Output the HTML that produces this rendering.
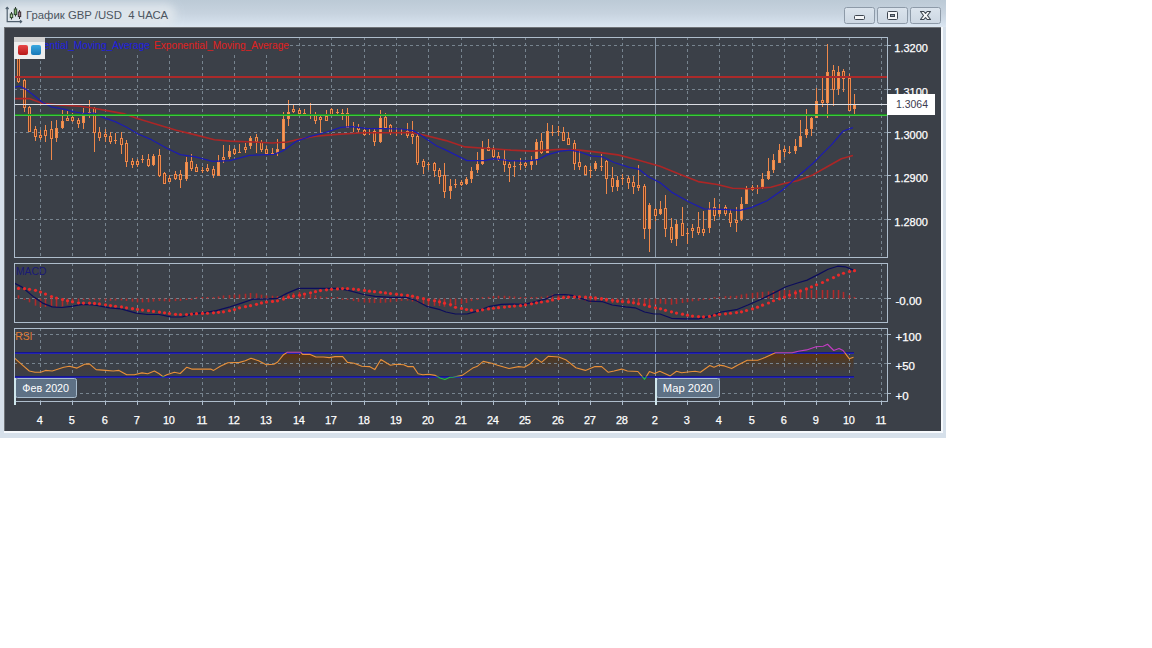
<!DOCTYPE html><html><head><meta charset="utf-8"><title>GBP/USD</title><style>
html,body{margin:0;padding:0;background:#fff;width:1152px;height:648px;overflow:hidden}
svg{display:block;font-family:"Liberation Sans",sans-serif}
</style></head><body>
<svg width="1152" height="648" viewBox="0 0 1152 648">
<defs>
<linearGradient id="tb" x1="0" y1="0" x2="0" y2="1"><stop offset="0" stop-color="#bccad6"/><stop offset="0.5" stop-color="#c7d3df"/><stop offset="0.9" stop-color="#d6e2ee"/><stop offset="1" stop-color="#dce6f1"/></linearGradient><filter id="glow" x="-20%" y="-50%" width="140%" height="200%"><feGaussianBlur stdDeviation="4"/></filter>
<linearGradient id="btn" x1="0" y1="0" x2="0" y2="1"><stop offset="0" stop-color="#dbe4ed"/><stop offset="1" stop-color="#ccd7e2"/></linearGradient>
<linearGradient id="rsif" x1="0" y1="352" x2="0" y2="376" gradientUnits="userSpaceOnUse"><stop offset="0" stop-color="#60330c"/><stop offset="0.33" stop-color="#4d3926"/><stop offset="0.7" stop-color="#403d40"/><stop offset="1" stop-color="#3b3f47"/></linearGradient>
<linearGradient id="rbox" x1="0" y1="0" x2="0" y2="1"><stop offset="0" stop-color="#e84848"/><stop offset="1" stop-color="#b81818"/></linearGradient>
<linearGradient id="bbox" x1="0" y1="0" x2="0" y2="1"><stop offset="0" stop-color="#3aa8e0"/><stop offset="1" stop-color="#1878b8"/></linearGradient>
<clipPath id="cmain"><rect x="15" y="38" width="872" height="219"/></clipPath>
<clipPath id="cmacd"><rect x="15" y="264" width="872" height="58"/></clipPath>
<clipPath id="crsi"><rect x="15" y="329" width="872" height="72"/></clipPath>
<clipPath id="cband"><rect x="0" y="352.5" width="1152" height="24"/></clipPath>
<clipPath id="cup"><rect x="0" y="0" width="1152" height="352.8"/></clipPath>
<clipPath id="cdn"><rect x="0" y="376.4" width="1152" height="100"/></clipPath>
</defs>
<rect x="0" y="0" width="946" height="438" fill="#d6e0ea"/>
<rect x="0" y="0" width="946" height="27" fill="url(#tb)"/>
<rect x="0" y="27" width="4" height="406" fill="#d6e0ea"/>
<rect x="-4" y="4" width="180" height="22" rx="10" fill="#dfe6ec" opacity="0.95" filter="url(#glow)"/>
<rect x="4" y="431" width="939" height="2" fill="#f6f9fc"/>
<rect x="941" y="27" width="2" height="406" fill="#f6f9fc"/>
<rect x="4" y="27" width="937" height="404" fill="#3b4048"/>
<rect x="4" y="27" width="937" height="1" fill="#6f7378"/>
<rect x="4" y="27" width="1" height="404" fill="#6f7378"/>
<g fill="none" stroke="#4f5f6e" stroke-width="1.2">
<path d="M7.2 7.5 V21.6 H21.5"/>
<path d="M5.8 9 L7.2 7.4 L8.6 9 M20 20.2 L21.6 21.6 L20 23"/>
</g>
<g stroke-width="1">
<path d="M11.5 12 V19.5 M15.5 7 V16.5 M19.5 10 V19" stroke="#2c3a30"/>
<rect x="10.3" y="14" width="2.4" height="3.6" fill="#b4d4a0" stroke="#2f4530"/>
<rect x="14.3" y="9" width="2.4" height="5.6" fill="#78b068" stroke="#2f4530"/>
<rect x="18.3" y="12" width="2.4" height="4.6" fill="#a87888" stroke="#3a2e34"/>
</g>
<text x="26" y="19.4" font-size="11.4" fill="#4c5560" textLength="142" lengthAdjust="spacingAndGlyphs">График GBP /USD&#160; 4 ЧАСА</text>
<rect x="844.5" y="7.5" width="30" height="16" rx="2" ry="2" fill="url(#btn)" stroke="#8d9aa8" stroke-width="1"/>
<rect x="877.5" y="7.5" width="30" height="16" rx="2" ry="2" fill="url(#btn)" stroke="#8d9aa8" stroke-width="1"/>
<rect x="910.5" y="7.5" width="30" height="16" rx="2" ry="2" fill="url(#btn)" stroke="#8d9aa8" stroke-width="1"/>
<rect x="854.5" y="15.5" width="10" height="4" rx="1" fill="#f4f6f8" stroke="#3e4650" stroke-width="1"/>
<rect x="887.5" y="11.5" width="10" height="8" rx="1" fill="#f4f6f8" stroke="#3e4650" stroke-width="1"/>
<rect x="890.5" y="14.5" width="4" height="2" fill="#8a96a2" stroke="#3e4650" stroke-width="1"/>
<path d="M920.5 11.5 H923.8 L925.5 13.4 L927.2 11.5 H930.5 L927.5 15.5 L930.5 19.5 H927.2 L925.5 17.6 L923.8 19.5 H920.5 L923.5 15.5 Z" fill="#f6f7f8" stroke="#3e4650" stroke-width="1.1" stroke-linejoin="round"/>
<g clip-path="url(#cband)"><polygon points="14,357.6 21.6,364.3 29.3,371 35,372.3 40.7,372.3 45.5,370.4 52.2,371 63.7,367.2 69.4,366.2 77,368.1 84.7,364.3 89.4,363.9 96.1,369.6 105.7,370.4 113.3,371 119,370.4 126.7,374.8 134.3,374.8 142,372.9 147.7,373.8 154.4,371 159.2,373.8 163,376.7 166.8,374.8 174.4,372.3 180.2,373.5 186.8,367.2 191.6,369.1 210.7,369.1 213.6,370.4 220.3,366.2 227.9,362.8 239.5,362.4 245.3,360.8 251,358.2 258.6,360.8 266.3,364.7 273.9,364.3 277.7,362 283.5,354.7 287.3,352.3 300.7,352.3 302.6,354.4 310.2,354.4 315.9,357 323.6,357 329.3,357.6 335,356.6 342.7,356.6 347.5,362.4 354.1,363.3 361.8,366.2 369.4,366.6 374.8,369.6 380.9,359.5 390.4,365.2 396.2,364.3 403.8,364.7 407.6,366.6 413.3,366.6 418.1,373.8 422.9,374.8 428.6,374.2 435.3,375.4 440.1,378 444.9,379.6 450,377.3 452.7,377.3 462.2,375.4 472.7,368.1 477.5,366.2 483.2,361.4 491.8,363.3 497.6,365.2 509,368.5 518.6,366.6 524.3,367.2 530,363.9 535.8,358.2 541.5,362.4 548.2,356.3 558.7,357 566.3,360.1 575.9,367.7 585.4,370.4 595,366.6 601.7,366.6 608.3,372.3 614.1,371 621.7,369.1 627.4,371 637.9,371.5 640.8,374.8 644.6,379.3 649.4,371.6 654.6,373.4 659.8,371.3 670.2,375.9 676.5,371.3 681.7,372.8 690,371.75 695.2,371.3 700.4,372.2 709.8,365.5 714,367.2 719.2,365.1 724.4,365.9 731.7,368.6 737.9,365.1 747.3,360.3 757.7,360.3 765,357.6 775.4,352.8 792.1,352.8 798.3,351.3 806.7,349.9 816,346.75 823.3,346.3 827.5,344.25 833.75,350.5 839,348.4 843.1,350.5 849.4,358.8 853.5,357.2 853.5,377 14,377" fill="url(#rsif)"/></g>
<g stroke="#77848f" stroke-width="1" stroke-dasharray="3 3" shape-rendering="crispEdges" fill="none">
<path d="M40.5 37 V257 M40.5 263 V322 M40.5 328 V401"/>
<path d="M72.5 37 V257 M72.5 263 V322 M72.5 328 V401"/>
<path d="M105.5 37 V257 M105.5 263 V322 M105.5 328 V401"/>
<path d="M137.5 37 V257 M137.5 263 V322 M137.5 328 V401"/>
<path d="M169.5 37 V257 M169.5 263 V322 M169.5 328 V401"/>
<path d="M202.5 37 V257 M202.5 263 V322 M202.5 328 V401"/>
<path d="M234.5 37 V257 M234.5 263 V322 M234.5 328 V401"/>
<path d="M266.5 37 V257 M266.5 263 V322 M266.5 328 V401"/>
<path d="M299.5 37 V257 M299.5 263 V322 M299.5 328 V401"/>
<path d="M331.5 37 V257 M331.5 263 V322 M331.5 328 V401"/>
<path d="M364.5 37 V257 M364.5 263 V322 M364.5 328 V401"/>
<path d="M396.5 37 V257 M396.5 263 V322 M396.5 328 V401"/>
<path d="M428.5 37 V257 M428.5 263 V322 M428.5 328 V401"/>
<path d="M461.5 37 V257 M461.5 263 V322 M461.5 328 V401"/>
<path d="M493.5 37 V257 M493.5 263 V322 M493.5 328 V401"/>
<path d="M525.5 37 V257 M525.5 263 V322 M525.5 328 V401"/>
<path d="M558.5 37 V257 M558.5 263 V322 M558.5 328 V401"/>
<path d="M590.5 37 V257 M590.5 263 V322 M590.5 328 V401"/>
<path d="M622.5 37 V257 M622.5 263 V322 M622.5 328 V401"/>
<path d="M687.5 37 V257 M687.5 263 V322 M687.5 328 V401"/>
<path d="M719.5 37 V257 M719.5 263 V322 M719.5 328 V401"/>
<path d="M752.5 37 V257 M752.5 263 V322 M752.5 328 V401"/>
<path d="M784.5 37 V257 M784.5 263 V322 M784.5 328 V401"/>
<path d="M816.5 37 V257 M816.5 263 V322 M816.5 328 V401"/>
<path d="M849.5 37 V257 M849.5 263 V322 M849.5 328 V401"/>
<path d="M881.5 37 V257 M881.5 263 V322 M881.5 328 V401"/>
<path d="M14 45.5 H887"/>
<path d="M14 89.5 H887"/>
<path d="M14 132.5 H887"/>
<path d="M14 175.5 H887"/>
<path d="M14 219.5 H887"/>
<path d="M14 298.5 H887"/>
<path d="M14 334.5 H887"/>
<path d="M14 363.5 H887"/>
<path d="M14 393.5 H887"/>
</g>
<path d="M655.5 38 V257 M655.5 264 V322 M655.5 329 V401" stroke="#8796a6" stroke-width="1" shape-rendering="crispEdges"/>
<g fill="none" stroke="#aebdcc" stroke-width="1" shape-rendering="crispEdges">
<rect x="14.5" y="37.5" width="873" height="220"/>
<rect x="14.5" y="263.5" width="873" height="59"/>
<rect x="14.5" y="328.5" width="873" height="73"/>
<path d="M888 45.5 H891"/>
<path d="M888 89.5 H891"/>
<path d="M888 132.5 H891"/>
<path d="M888 175.5 H891"/>
<path d="M888 219.5 H891"/>
<path d="M888 298.5 H891"/>
<path d="M888 334.5 H891"/>
<path d="M888 363.5 H891"/>
<path d="M888 393.5 H891"/>
<path d="M40.5 402 V405"/>
<path d="M72.5 402 V405"/>
<path d="M105.5 402 V405"/>
<path d="M137.5 402 V405"/>
<path d="M169.5 402 V405"/>
<path d="M202.5 402 V405"/>
<path d="M234.5 402 V405"/>
<path d="M266.5 402 V405"/>
<path d="M299.5 402 V405"/>
<path d="M331.5 402 V405"/>
<path d="M364.5 402 V405"/>
<path d="M396.5 402 V405"/>
<path d="M428.5 402 V405"/>
<path d="M461.5 402 V405"/>
<path d="M493.5 402 V405"/>
<path d="M525.5 402 V405"/>
<path d="M558.5 402 V405"/>
<path d="M590.5 402 V405"/>
<path d="M622.5 402 V405"/>
<path d="M655.5 402 V405"/>
<path d="M687.5 402 V405"/>
<path d="M719.5 402 V405"/>
<path d="M752.5 402 V405"/>
<path d="M784.5 402 V405"/>
<path d="M816.5 402 V405"/>
<path d="M849.5 402 V405"/>
<path d="M881.5 402 V405"/>
</g>
<g clip-path="url(#cmain)">
<path d="M18.5 55V83M24.5 79V112M29.5 106V132M35.5 126V141M40.5 130V140M45.5 125V142M51.5 121V160M56.5 120V142M62.5 110V129M67.5 111V120M72.5 113V122M78.5 118V128M83.5 108V129M89.5 100V118M94.5 107V152M99.5 127V141M105.5 129V142M110.5 132V144M115.5 133V144M121.5 132V154M126.5 140V167M132.5 158V168M137.5 159V167M142.5 155V163M148.5 154V167M153.5 154V166M159.5 149V177M164.5 172V184M169.5 175V182M175.5 171V180M180.5 170V188M186.5 157V181M191.5 154V171M196.5 164V172M202.5 167V173M207.5 164V172M213.5 166V178M218.5 155V176M223.5 145V163M229.5 145V159M234.5 148V155M239.5 144V153M245.5 143V153M250.5 136V149M256.5 134V153M261.5 140V152M266.5 146V154M272.5 148V154M277.5 139V156M283.5 112V149M288.5 100V126M293.5 105V113M299.5 108V114M304.5 109V114M310.5 103V119M315.5 112V124M320.5 114V133M326.5 110V120M331.5 108V116M337.5 109V115M342.5 109V120M347.5 108V128M353.5 122V132M358.5 124V133M364.5 128V136M369.5 128V135M374.5 129V146M380.5 110V143M385.5 113V128M390.5 124V135M396.5 128V136M401.5 129V135M407.5 123V138M412.5 121V144M417.5 134V165M423.5 159V174M428.5 162V170M434.5 162V177M439.5 168V184M444.5 163V198M450.5 179V199M455.5 179V188M461.5 180V186M466.5 177V185M471.5 167V183M477.5 152V173M482.5 141V165M488.5 139V151M493.5 147V158M498.5 152V161M504.5 150V172M509.5 162V182M514.5 161V177M520.5 158V170M525.5 161V168M531.5 156V170M536.5 139V165M541.5 133V154M547.5 123V152M552.5 125V136M558.5 126V136M563.5 127V141M568.5 132V145M574.5 140V170M579.5 151V170M585.5 165V175M590.5 166V178M595.5 161V171M601.5 154V171M606.5 160V194M612.5 167V192M617.5 176V191M622.5 174V185M628.5 176V189M633.5 176V194M638.5 165V191M644.5 184V239M649.5 203V252M655.5 208V221M660.5 201V215M665.5 195V237M671.5 218V243M676.5 220V246M682.5 207V236M687.5 228V244M692.5 224V238M698.5 212V235M703.5 211V236M709.5 202V233M714.5 198V221M719.5 204V217M725.5 205V216M730.5 209V227M736.5 207V232M741.5 197V221M746.5 186V204M752.5 185V191M757.5 185V194M762.5 173V189M768.5 158V180M773.5 154V173M779.5 144V163M784.5 146V157M789.5 146V154M795.5 139V154M800.5 120V147M806.5 109V138M811.5 117V136M816.5 88V118M822.5 78V107M827.5 44V118M833.5 65V106M838.5 66V95M843.5 69V92M849.5 74V111M854.5 94V115" stroke="#ee884a" stroke-width="1" shape-rendering="crispEdges"/>
<g fill="#6a3822" stroke="#ee884a" stroke-width="1" shape-rendering="crispEdges"><rect x="17.5" y="57.5" width="2" height="24"/><rect x="23.5" y="80.5" width="2" height="27"/><rect x="28.5" y="107.5" width="2" height="24"/><rect x="34.5" y="129.5" width="2" height="7"/><rect x="39.5" y="135.5" width="2" height="2"/><rect x="44.5" y="130.5" width="2" height="5"/><rect x="50.5" y="129.5" width="2" height="9"/><rect x="66.5" y="118.5" width="2" height="2"/><rect x="71.5" y="117.5" width="2" height="3"/><rect x="77.5" y="120.5" width="2" height="3"/><rect x="93.5" y="108.5" width="2" height="24"/><rect x="98.5" y="132.5" width="2" height="5"/><rect x="104.5" y="134.5" width="2" height="2"/><rect x="109.5" y="136.5" width="2" height="5"/><rect x="120.5" y="138.5" width="2" height="6"/><rect x="125.5" y="143.5" width="2" height="18"/><rect x="131.5" y="161.5" width="2" height="3"/><rect x="136.5" y="161.5" width="2" height="3"/><rect x="147.5" y="159.5" width="2" height="6"/><rect x="158.5" y="155.5" width="2" height="20"/><rect x="163.5" y="173.5" width="2" height="10"/><rect x="168.5" y="178.5" width="2" height="3"/><rect x="174.5" y="174.5" width="2" height="4"/><rect x="179.5" y="174.5" width="2" height="5"/><rect x="190.5" y="161.5" width="2" height="7"/><rect x="195.5" y="167.5" width="2" height="4"/><rect x="206.5" y="168.5" width="2" height="2"/><rect x="212.5" y="169.5" width="2" height="5"/><rect x="222.5" y="157.5" width="2" height="2"/><rect x="233.5" y="149.5" width="2" height="4"/><rect x="244.5" y="147.5" width="2" height="2"/><rect x="255.5" y="137.5" width="2" height="4"/><rect x="260.5" y="142.5" width="2" height="7"/><rect x="265.5" y="149.5" width="2" height="4"/><rect x="292.5" y="109.5" width="2" height="2"/><rect x="298.5" y="110.5" width="2" height="3"/><rect x="314.5" y="114.5" width="2" height="6"/><rect x="319.5" y="117.5" width="2" height="2"/><rect x="325.5" y="116.5" width="2" height="4"/><rect x="330.5" y="109.5" width="2" height="5"/><rect x="346.5" y="113.5" width="2" height="14"/><rect x="357.5" y="127.5" width="2" height="2"/><rect x="363.5" y="130.5" width="2" height="4"/><rect x="373.5" y="131.5" width="2" height="10"/><rect x="384.5" y="117.5" width="2" height="10"/><rect x="389.5" y="125.5" width="2" height="7"/><rect x="406.5" y="131.5" width="2" height="4"/><rect x="411.5" y="134.5" width="2" height="2"/><rect x="416.5" y="136.5" width="2" height="26"/><rect x="422.5" y="161.5" width="2" height="5"/><rect x="433.5" y="163.5" width="2" height="7"/><rect x="438.5" y="170.5" width="2" height="6"/><rect x="443.5" y="175.5" width="2" height="16"/><rect x="460.5" y="182.5" width="2" height="2"/><rect x="487.5" y="147.5" width="2" height="3"/><rect x="492.5" y="149.5" width="2" height="7"/><rect x="497.5" y="156.5" width="2" height="3"/><rect x="503.5" y="159.5" width="2" height="5"/><rect x="508.5" y="164.5" width="2" height="3"/><rect x="524.5" y="163.5" width="2" height="2"/><rect x="540.5" y="141.5" width="2" height="11"/><rect x="562.5" y="132.5" width="2" height="8"/><rect x="567.5" y="138.5" width="2" height="6"/><rect x="573.5" y="143.5" width="2" height="20"/><rect x="578.5" y="162.5" width="2" height="4"/><rect x="584.5" y="166.5" width="2" height="8"/><rect x="605.5" y="161.5" width="2" height="17"/><rect x="611.5" y="178.5" width="2" height="8"/><rect x="627.5" y="178.5" width="2" height="4"/><rect x="632.5" y="182.5" width="2" height="4"/><rect x="637.5" y="185.5" width="2" height="2"/><rect x="643.5" y="186.5" width="2" height="42"/><rect x="654.5" y="209.5" width="2" height="6"/><rect x="664.5" y="208.5" width="2" height="20"/><rect x="670.5" y="227.5" width="2" height="12"/><rect x="681.5" y="223.5" width="2" height="12"/><rect x="691.5" y="228.5" width="2" height="2"/><rect x="697.5" y="227.5" width="2" height="5"/><rect x="702.5" y="229.5" width="2" height="3"/><rect x="713.5" y="207.5" width="2" height="8"/><rect x="724.5" y="207.5" width="2" height="6"/><rect x="729.5" y="213.5" width="2" height="9"/><rect x="735.5" y="220.5" width="2" height="2"/><rect x="751.5" y="187.5" width="2" height="2"/><rect x="783.5" y="149.5" width="2" height="2"/><rect x="821.5" y="100.5" width="2" height="2"/><rect x="832.5" y="70.5" width="2" height="19"/><rect x="842.5" y="71.5" width="2" height="7"/><rect x="848.5" y="78.5" width="2" height="32"/></g>
<g fill="#f39a56" stroke="#ee884a" stroke-width="1" shape-rendering="crispEdges"><rect x="55.5" y="128.5" width="2" height="9"/><rect x="61.5" y="121.5" width="2" height="6"/><rect x="82.5" y="113.5" width="2" height="9"/><rect x="152.5" y="156.5" width="2" height="8"/><rect x="185.5" y="162.5" width="2" height="16"/><rect x="217.5" y="162.5" width="2" height="13"/><rect x="228.5" y="151.5" width="2" height="5"/><rect x="249.5" y="138.5" width="2" height="7"/><rect x="276.5" y="149.5" width="2" height="3"/><rect x="282.5" y="119.5" width="2" height="29"/><rect x="287.5" y="112.5" width="2" height="6"/><rect x="379.5" y="118.5" width="2" height="23"/><rect x="449.5" y="186.5" width="2" height="4"/><rect x="465.5" y="179.5" width="2" height="4"/><rect x="470.5" y="171.5" width="2" height="7"/><rect x="476.5" y="164.5" width="2" height="5"/><rect x="481.5" y="148.5" width="2" height="15"/><rect x="530.5" y="161.5" width="2" height="3"/><rect x="535.5" y="142.5" width="2" height="17"/><rect x="546.5" y="131.5" width="2" height="21"/><rect x="594.5" y="163.5" width="2" height="5"/><rect x="616.5" y="180.5" width="2" height="6"/><rect x="648.5" y="205.5" width="2" height="23"/><rect x="659.5" y="209.5" width="2" height="4"/><rect x="675.5" y="224.5" width="2" height="14"/><rect x="708.5" y="209.5" width="2" height="18"/><rect x="718.5" y="210.5" width="2" height="3"/><rect x="740.5" y="204.5" width="2" height="14"/><rect x="745.5" y="189.5" width="2" height="14"/><rect x="761.5" y="179.5" width="2" height="7"/><rect x="767.5" y="171.5" width="2" height="7"/><rect x="772.5" y="160.5" width="2" height="9"/><rect x="778.5" y="150.5" width="2" height="12"/><rect x="794.5" y="146.5" width="2" height="4"/><rect x="799.5" y="136.5" width="2" height="10"/><rect x="805.5" y="129.5" width="2" height="5"/><rect x="810.5" y="118.5" width="2" height="10"/><rect x="815.5" y="101.5" width="2" height="16"/><rect x="826.5" y="72.5" width="2" height="30"/><rect x="837.5" y="72.5" width="2" height="16"/><rect x="853.5" y="104.5" width="2" height="4"/></g>
<g fill="#ee884a" shape-rendering="crispEdges"><rect x="88" y="112" width="3" height="1"/><rect x="114" y="140" width="3" height="1"/><rect x="141" y="159" width="3" height="1"/><rect x="201" y="170" width="3" height="1"/><rect x="238" y="152" width="3" height="1"/><rect x="271" y="153" width="3" height="1"/><rect x="303" y="113" width="3" height="1"/><rect x="309" y="114" width="3" height="1"/><rect x="336" y="112" width="3" height="1"/><rect x="341" y="113" width="3" height="1"/><rect x="352" y="126" width="3" height="1"/><rect x="368" y="132" width="3" height="1"/><rect x="395" y="132" width="3" height="1"/><rect x="400" y="132" width="3" height="1"/><rect x="427" y="164" width="3" height="1"/><rect x="454" y="184" width="3" height="1"/><rect x="513" y="166" width="3" height="1"/><rect x="519" y="164" width="3" height="1"/><rect x="551" y="132" width="3" height="1"/><rect x="557" y="131" width="3" height="1"/><rect x="589" y="170" width="3" height="1"/><rect x="600" y="166" width="3" height="1"/><rect x="621" y="178" width="3" height="1"/><rect x="686" y="233" width="3" height="1"/><rect x="756" y="188" width="3" height="1"/><rect x="788" y="152" width="3" height="1"/></g>
<polyline points="14,98.6 29.3,98.6 42.6,103.4 61.7,105.3 80.8,106.3 94.2,108.2 109.5,111.1 124.8,113.9 138.1,118.7 157.2,124.4 176.3,130.2 195.4,134.9 214.5,139.7 230,141.1 252.9,142 272,143 287.3,142 298.8,139.2 315.9,136.3 337,134.4 363.7,132.8 392.3,132.8 411.4,132.5 424.8,135.3 446,140.6 465.1,146.9 484.2,148.2 510.9,150.1 531.9,151.1 560.6,149.2 579.7,150.1 598.8,152.4 617.9,154.9 637,159.7 660,166.3 679.1,174 698.2,181.6 717.3,184.5 732.6,188.3 749.8,188.7 770.8,187.3 784.1,183.5 797.5,180.7 812.8,174.9 828.1,166.3 841.4,158.7 852.9,155.5" fill="none" stroke="#ac2626" stroke-width="1.6" stroke-linejoin="round"/>
<polyline points="14,87.2 19.7,86.2 25.5,89.1 33.1,94.8 42.6,102.5 52.2,107.2 63.7,109.2 75.1,112 84.7,113.5 94.2,113 103.8,117.7 115.2,121.6 126.7,127.3 138.1,134 151.5,139.7 166.8,148.3 180.2,154.6 195.4,156.9 212.6,161.3 230,160.7 249.1,155.4 273.9,154.4 283.5,150.6 296.8,141.1 310.2,136.3 325.5,132.5 340.8,127.3 352.2,126.7 367.5,128.6 382.8,128.6 401.9,129 413.3,130.6 421,135.3 436.3,145.8 446,150.1 455.5,154.9 467,160.6 484.2,160.6 493.7,158.7 509,160.6 526.2,161.2 537.7,159.7 547.2,154.9 560.6,151.1 570.1,150.1 579.7,152 591.2,155.8 602.6,156.8 614.1,162.5 629.3,167.3 638.9,169.2 648.4,176.8 660,182.6 671.5,192.1 688.6,201.7 703.9,208.9 723,209.3 740.2,210.3 751.7,207.4 767,200.7 782.2,190.2 797.5,176.8 812.8,163.5 822.3,153.9 831.9,144.4 843.3,131 852.9,127.6" fill="none" stroke="#1c1cb0" stroke-width="1.25" stroke-linejoin="round"/>
<path d="M15 77 H887" stroke="#ab2a2a" stroke-width="2" shape-rendering="crispEdges"/>
<path d="M15 104.5 H887" stroke="#dcdee4" stroke-width="1.2"/>
<path d="M15 114.5 H887" stroke="#1f8a22" stroke-width="1" shape-rendering="crispEdges"/>
<path d="M15 115.5 H887" stroke="#3cc83c" stroke-width="1" shape-rendering="crispEdges"/>
</g>
<rect x="15" y="38" width="275" height="16" fill="#3b4048"/>
<text x="15" y="49" font-size="10.2" fill="#1e1ee0" textLength="135" lengthAdjust="spacingAndGlyphs">Exponential_Moving_Average</text>
<text x="154" y="49" font-size="10.2" fill="#e02020" textLength="135" lengthAdjust="spacingAndGlyphs">Exponential_Moving_Average</text>
<rect x="14" y="37" width="31" height="22" fill="#eeeeee"/>
<rect x="14" y="37" width="31" height="5" fill="#d0d0d0"/>
<rect x="18" y="45" width="10" height="10" rx="2" fill="url(#rbox)"/>
<rect x="31" y="45" width="10" height="10" rx="2" fill="url(#bbox)"/>
<rect x="887" y="94" width="48" height="21" fill="#ffffff"/>
<text x="896" y="108" font-size="11" fill="#3c3a4e" textLength="32" lengthAdjust="spacingAndGlyphs">1.3064</text>
<g fill="#ffffff" stroke="#ffffff" stroke-width="0.25" font-size="11">
<text x="894.3" y="52.2" font-size="11.5" textLength="33.6" lengthAdjust="spacingAndGlyphs">1.3200</text>
<text x="894.3" y="96.2" font-size="11.5" textLength="33.6" lengthAdjust="spacingAndGlyphs">1.3100</text>
<text x="894.3" y="139.2" font-size="11.5" textLength="33.6" lengthAdjust="spacingAndGlyphs">1.3000</text>
<text x="894.3" y="182.2" font-size="11.5" textLength="33.6" lengthAdjust="spacingAndGlyphs">1.2900</text>
<text x="894.3" y="226.2" font-size="11.5" textLength="33.6" lengthAdjust="spacingAndGlyphs">1.2800</text>
<text x="895.5" y="305.2" font-size="11.5">-0.00</text>
<text x="895.5" y="341.2" font-size="11.5">+100</text>
<text x="895.5" y="370.2" font-size="11.5">+50</text>
<text x="895.5" y="400.2" font-size="11.5">+0</text>
</g>
<rect x="887" y="94" width="48" height="21" fill="#ffffff"/>
<text x="896" y="108" font-size="11" fill="#3c3a4e" textLength="32" lengthAdjust="spacingAndGlyphs">1.3064</text>
<text x="16" y="275" font-size="10.3" fill="#1a1a78">MACD</text>
<g clip-path="url(#cmacd)">
<g fill="#b02a2a"><rect x="17.7" y="295.29" width="1.6" height="3.21"/><rect x="23.7" y="298.5" width="1.6" height="1.5"/><rect x="28.7" y="298.5" width="1.6" height="3.81"/><rect x="34.7" y="298.5" width="1.6" height="7.12"/><rect x="39.7" y="298.5" width="1.6" height="8.5"/><rect x="44.7" y="298.5" width="1.6" height="8.5"/><rect x="50.7" y="298.5" width="1.6" height="8.5"/><rect x="55.7" y="298.5" width="1.6" height="8.5"/><rect x="61.7" y="298.5" width="1.6" height="7.99"/><rect x="66.7" y="298.5" width="1.6" height="6.07"/><rect x="71.7" y="298.5" width="1.6" height="4.34"/><rect x="77.7" y="298.5" width="1.6" height="2.37"/><rect x="82.7" y="298.5" width="1.6" height="1.5"/><rect x="88.7" y="298.5" width="1.6" height="1.6"/><rect x="93.7" y="298.5" width="1.6" height="1.55"/><rect x="98.7" y="298.5" width="1.6" height="1.99"/><rect x="104.7" y="298.5" width="1.6" height="2.17"/><rect x="109.7" y="298.5" width="1.6" height="2.28"/><rect x="114.7" y="298.5" width="1.6" height="2.09"/><rect x="120.7" y="298.5" width="1.6" height="1.9"/><rect x="125.7" y="298.5" width="1.6" height="2.55"/><rect x="131.7" y="298.5" width="1.6" height="3.21"/><rect x="136.7" y="298.5" width="1.6" height="3.92"/><rect x="141.7" y="298.5" width="1.6" height="3.86"/><rect x="147.7" y="298.5" width="1.6" height="3.78"/><rect x="152.7" y="298.5" width="1.6" height="3.11"/><rect x="158.7" y="298.5" width="1.6" height="2.44"/><rect x="163.7" y="298.5" width="1.6" height="2.73"/><rect x="168.7" y="298.5" width="1.6" height="3.04"/><rect x="174.7" y="298.5" width="1.6" height="2.59"/><rect x="179.7" y="298.5" width="1.6" height="2.47"/><rect x="185.7" y="298.5" width="1.6" height="1.5"/><rect x="190.7" y="298.5" width="1.6" height="1.5"/><rect x="195.7" y="297" width="1.6" height="1.5"/><rect x="201.7" y="297" width="1.6" height="1.5"/><rect x="206.7" y="297" width="1.6" height="1.5"/><rect x="212.7" y="297" width="1.6" height="1.5"/><rect x="217.7" y="296.47" width="1.6" height="2.03"/><rect x="222.7" y="295.49" width="1.6" height="3.01"/><rect x="228.7" y="295.03" width="1.6" height="3.47"/><rect x="233.7" y="294.51" width="1.6" height="3.99"/><rect x="238.7" y="294.46" width="1.6" height="4.04"/><rect x="244.7" y="293.72" width="1.6" height="4.78"/><rect x="249.7" y="292.95" width="1.6" height="5.55"/><rect x="255.7" y="293.36" width="1.6" height="5.14"/><rect x="260.7" y="294.66" width="1.6" height="3.84"/><rect x="265.7" y="295.38" width="1.6" height="3.12"/><rect x="271.7" y="295.71" width="1.6" height="2.79"/><rect x="276.7" y="295.98" width="1.6" height="2.52"/><rect x="282.7" y="295.05" width="1.6" height="3.45"/><rect x="287.7" y="294.1" width="1.6" height="4.4"/><rect x="292.7" y="293.04" width="1.6" height="5.46"/><rect x="298.7" y="291.77" width="1.6" height="6.73"/><rect x="303.7" y="292.91" width="1.6" height="5.59"/><rect x="309.7" y="294.16" width="1.6" height="4.34"/><rect x="314.7" y="295.26" width="1.6" height="3.24"/><rect x="319.7" y="296.33" width="1.6" height="2.17"/><rect x="325.7" y="297" width="1.6" height="1.5"/><rect x="330.7" y="297" width="1.6" height="1.5"/><rect x="336.7" y="297" width="1.6" height="1.5"/><rect x="341.7" y="298.5" width="1.6" height="1.5"/><rect x="346.7" y="298.5" width="1.6" height="1.51"/><rect x="352.7" y="298.5" width="1.6" height="2.44"/><rect x="357.7" y="298.5" width="1.6" height="3.35"/><rect x="363.7" y="298.5" width="1.6" height="4.04"/><rect x="368.7" y="298.5" width="1.6" height="4.22"/><rect x="373.7" y="298.5" width="1.6" height="4.55"/><rect x="379.7" y="298.5" width="1.6" height="4.4"/><rect x="384.7" y="298.5" width="1.6" height="4.1"/><rect x="389.7" y="298.5" width="1.6" height="3.75"/><rect x="395.7" y="298.5" width="1.6" height="3.08"/><rect x="400.7" y="298.5" width="1.6" height="2.45"/><rect x="406.7" y="298.5" width="1.6" height="2.12"/><rect x="411.7" y="298.5" width="1.6" height="3.06"/><rect x="416.7" y="298.5" width="1.6" height="3.9"/><rect x="422.7" y="298.5" width="1.6" height="5.49"/><rect x="427.7" y="298.5" width="1.6" height="6.89"/><rect x="433.7" y="298.5" width="1.6" height="7.32"/><rect x="438.7" y="298.5" width="1.6" height="7.57"/><rect x="443.7" y="298.5" width="1.6" height="8.22"/><rect x="449.7" y="298.5" width="1.6" height="8.3"/><rect x="454.7" y="298.5" width="1.6" height="6.61"/><rect x="460.7" y="298.5" width="1.6" height="5.53"/><rect x="465.7" y="298.5" width="1.6" height="4.5"/><rect x="470.7" y="298.5" width="1.6" height="2.63"/><rect x="476.7" y="298.5" width="1.6" height="1.5"/><rect x="481.7" y="297" width="1.6" height="1.5"/><rect x="487.7" y="296.82" width="1.6" height="1.68"/><rect x="492.7" y="296.06" width="1.6" height="2.44"/><rect x="497.7" y="295.78" width="1.6" height="2.72"/><rect x="503.7" y="295.76" width="1.6" height="2.74"/><rect x="508.7" y="296.14" width="1.6" height="2.36"/><rect x="513.7" y="296.51" width="1.6" height="1.99"/><rect x="519.7" y="297" width="1.6" height="1.5"/><rect x="524.7" y="297" width="1.6" height="1.5"/><rect x="530.7" y="297" width="1.6" height="1.5"/><rect x="535.7" y="297" width="1.6" height="1.5"/><rect x="540.7" y="296.69" width="1.6" height="1.81"/><rect x="546.7" y="295.75" width="1.6" height="2.75"/><rect x="551.7" y="294.57" width="1.6" height="3.93"/><rect x="557.7" y="294.58" width="1.6" height="3.92"/><rect x="562.7" y="295.42" width="1.6" height="3.08"/><rect x="567.7" y="296.47" width="1.6" height="2.03"/><rect x="573.7" y="297" width="1.6" height="1.5"/><rect x="578.7" y="298.5" width="1.6" height="1.5"/><rect x="584.7" y="298.5" width="1.6" height="2.58"/><rect x="589.7" y="298.5" width="1.6" height="3.98"/><rect x="594.7" y="298.5" width="1.6" height="3.54"/><rect x="600.7" y="298.5" width="1.6" height="2.97"/><rect x="605.7" y="298.5" width="1.6" height="3.47"/><rect x="611.7" y="298.5" width="1.6" height="4.52"/><rect x="616.7" y="298.5" width="1.6" height="4.62"/><rect x="621.7" y="298.5" width="1.6" height="4.9"/><rect x="627.7" y="298.5" width="1.6" height="5.13"/><rect x="632.7" y="298.5" width="1.6" height="4.79"/><rect x="637.7" y="298.5" width="1.6" height="5.45"/><rect x="643.7" y="298.5" width="1.6" height="6.82"/><rect x="648.7" y="298.5" width="1.6" height="6.59"/><rect x="654.7" y="298.5" width="1.6" height="6.03"/><rect x="659.7" y="298.5" width="1.6" height="5.2"/><rect x="664.7" y="298.5" width="1.6" height="5.72"/><rect x="670.7" y="298.5" width="1.6" height="6.24"/><rect x="675.7" y="298.5" width="1.6" height="5.48"/><rect x="681.7" y="298.5" width="1.6" height="4.54"/><rect x="686.7" y="298.5" width="1.6" height="3.72"/><rect x="691.7" y="298.5" width="1.6" height="2.83"/><rect x="697.7" y="298.5" width="1.6" height="2.32"/><rect x="702.7" y="298.5" width="1.6" height="1.5"/><rect x="708.7" y="298.5" width="1.6" height="1.5"/><rect x="713.7" y="297" width="1.6" height="1.5"/><rect x="718.7" y="296.87" width="1.6" height="1.63"/><rect x="724.7" y="296.17" width="1.6" height="2.33"/><rect x="729.7" y="295.89" width="1.6" height="2.61"/><rect x="735.7" y="295.77" width="1.6" height="2.73"/><rect x="740.7" y="294.5" width="1.6" height="4"/><rect x="745.7" y="293.66" width="1.6" height="4.84"/><rect x="751.7" y="292.9" width="1.6" height="5.6"/><rect x="756.7" y="292.34" width="1.6" height="6.16"/><rect x="761.7" y="291.85" width="1.6" height="6.65"/><rect x="767.7" y="291.41" width="1.6" height="7.09"/><rect x="772.7" y="291" width="1.6" height="7.5"/><rect x="778.7" y="290.19" width="1.6" height="8.31"/><rect x="783.7" y="290" width="1.6" height="8.5"/><rect x="788.7" y="290" width="1.6" height="8.5"/><rect x="794.7" y="290" width="1.6" height="8.5"/><rect x="799.7" y="290" width="1.6" height="8.5"/><rect x="805.7" y="290.11" width="1.6" height="8.39"/><rect x="810.7" y="290" width="1.6" height="8.5"/><rect x="815.7" y="290" width="1.6" height="8.5"/><rect x="821.7" y="290" width="1.6" height="8.5"/><rect x="826.7" y="290" width="1.6" height="8.5"/><rect x="832.7" y="290" width="1.6" height="8.5"/><rect x="837.7" y="290" width="1.6" height="8.5"/><rect x="842.7" y="291.92" width="1.6" height="6.58"/><rect x="848.7" y="295.08" width="1.6" height="3.42"/><rect x="853.7" y="297" width="1.6" height="1.5"/></g>
<polyline points="14,283 21.6,286.8 33.1,296.4 42.6,303.1 52.2,306.9 61.7,307.5 71.3,306.3 82.8,304.4 94.2,305 109.5,307.8 121,308.8 136.2,313.2 147.7,314.5 159.2,314.5 170.6,316.8 182.1,317 193.5,313.6 205,312.6 216.4,310.7 230,306.9 241.5,303.1 252.9,299.2 268.2,298.9 277.7,298.3 287.3,293.1 298.8,288.4 337,288.4 348.4,290.3 363.7,294.5 375.1,296.4 390.4,297.3 405.7,297.3 415.3,300.2 426.7,306.3 440.1,309.7 446,312 455.5,314 467,314 476.6,311.3 489.9,306.3 501.4,304.4 512.8,304 524.3,304.4 535.8,301.7 545.3,299.2 554.9,294.8 564.4,294.5 572.1,295.4 579.7,297.9 589.2,301.2 602.6,301.7 612.2,305 625.5,306.9 635.1,307.8 644.6,312 654.2,314 660,314 671.5,318.3 684.8,318.9 698.2,318.9 709.7,316.4 721.1,312 736.4,309.7 747.9,305 761.2,299.2 774.6,292.6 786,286.8 797.5,283 807.1,280.1 818.5,274.4 828.1,269.3 837.6,266.2 845.3,266.8 854.8,270.6" fill="none" stroke="#0c0c5c" stroke-width="1.2" stroke-linejoin="round"/>
<g fill="#e82a2a"><circle cx="18.5" cy="288.42" r="1.6"/><circle cx="24.5" cy="288.63" r="1.6"/><circle cx="29.5" cy="289.35" r="1.6"/><circle cx="35.5" cy="290.34" r="1.6"/><circle cx="40.5" cy="292" r="1.6"/><circle cx="45.5" cy="294.06" r="1.6"/><circle cx="51.5" cy="296.6" r="1.6"/><circle cx="56.5" cy="298" r="1.6"/><circle cx="62.5" cy="299.5" r="1.6"/><circle cx="67.5" cy="300.77" r="1.6"/><circle cx="72.5" cy="301.79" r="1.6"/><circle cx="78.5" cy="302.87" r="1.6"/><circle cx="83.5" cy="303.1" r="1.6"/><circle cx="89.5" cy="303.1" r="1.6"/><circle cx="94.5" cy="303.43" r="1.6"/><circle cx="99.5" cy="303.94" r="1.6"/><circle cx="105.5" cy="304.75" r="1.6"/><circle cx="110.5" cy="305.57" r="1.6"/><circle cx="115.5" cy="306.23" r="1.6"/><circle cx="121.5" cy="306.88" r="1.6"/><circle cx="126.5" cy="307.78" r="1.6"/><circle cx="132.5" cy="308.68" r="1.6"/><circle cx="137.5" cy="309.38" r="1.6"/><circle cx="142.5" cy="310.05" r="1.6"/><circle cx="148.5" cy="310.72" r="1.6"/><circle cx="153.5" cy="311.39" r="1.6"/><circle cx="159.5" cy="312.06" r="1.6"/><circle cx="164.5" cy="312.74" r="1.6"/><circle cx="169.5" cy="313.51" r="1.6"/><circle cx="175.5" cy="314.28" r="1.6"/><circle cx="180.5" cy="314.5" r="1.6"/><circle cx="186.5" cy="314.5" r="1.6"/><circle cx="191.5" cy="314.1" r="1.6"/><circle cx="196.5" cy="313.67" r="1.6"/><circle cx="202.5" cy="313.45" r="1.6"/><circle cx="207.5" cy="313.26" r="1.6"/><circle cx="213.5" cy="312.83" r="1.6"/><circle cx="218.5" cy="312.31" r="1.6"/><circle cx="223.5" cy="311.78" r="1.6"/><circle cx="229.5" cy="310.73" r="1.6"/><circle cx="234.5" cy="309.54" r="1.6"/><circle cx="239.5" cy="307.8" r="1.6"/><circle cx="245.5" cy="306.72" r="1.6"/><circle cx="250.5" cy="305.64" r="1.6"/><circle cx="256.5" cy="304.28" r="1.6"/><circle cx="261.5" cy="302.88" r="1.6"/><circle cx="266.5" cy="302.06" r="1.6"/><circle cx="272.5" cy="301.46" r="1.6"/><circle cx="277.5" cy="300.85" r="1.6"/><circle cx="283.5" cy="299.09" r="1.6"/><circle cx="288.5" cy="297.21" r="1.6"/><circle cx="293.5" cy="296.07" r="1.6"/><circle cx="299.5" cy="295.13" r="1.6"/><circle cx="304.5" cy="293.99" r="1.6"/><circle cx="310.5" cy="292.74" r="1.6"/><circle cx="315.5" cy="291.64" r="1.6"/><circle cx="320.5" cy="290.57" r="1.6"/><circle cx="326.5" cy="289.87" r="1.6"/><circle cx="331.5" cy="289.31" r="1.6"/><circle cx="337.5" cy="288.89" r="1.6"/><circle cx="342.5" cy="288.56" r="1.6"/><circle cx="347.5" cy="288.62" r="1.6"/><circle cx="353.5" cy="289.04" r="1.6"/><circle cx="358.5" cy="289.61" r="1.6"/><circle cx="364.5" cy="290.41" r="1.6"/><circle cx="369.5" cy="291.15" r="1.6"/><circle cx="374.5" cy="291.71" r="1.6"/><circle cx="380.5" cy="292.27" r="1.6"/><circle cx="385.5" cy="292.88" r="1.6"/><circle cx="390.5" cy="293.55" r="1.6"/><circle cx="396.5" cy="294.22" r="1.6"/><circle cx="401.5" cy="294.85" r="1.6"/><circle cx="407.5" cy="295.46" r="1.6"/><circle cx="412.5" cy="296.15" r="1.6"/><circle cx="417.5" cy="297.44" r="1.6"/><circle cx="423.5" cy="298.72" r="1.6"/><circle cx="428.5" cy="299.79" r="1.6"/><circle cx="434.5" cy="300.73" r="1.6"/><circle cx="439.5" cy="301.85" r="1.6"/><circle cx="444.5" cy="303.14" r="1.6"/><circle cx="450.5" cy="304.49" r="1.6"/><circle cx="455.5" cy="307.32" r="1.6"/><circle cx="461.5" cy="308.47" r="1.6"/><circle cx="466.5" cy="309.5" r="1.6"/><circle cx="471.5" cy="310.15" r="1.6"/><circle cx="477.5" cy="310.68" r="1.6"/><circle cx="482.5" cy="309.78" r="1.6"/><circle cx="488.5" cy="308.88" r="1.6"/><circle cx="493.5" cy="308.25" r="1.6"/><circle cx="498.5" cy="307.64" r="1.6"/><circle cx="504.5" cy="307.06" r="1.6"/><circle cx="509.5" cy="306.49" r="1.6"/><circle cx="514.5" cy="306.05" r="1.6"/><circle cx="520.5" cy="305.68" r="1.6"/><circle cx="525.5" cy="304.9" r="1.6"/><circle cx="531.5" cy="303.78" r="1.6"/><circle cx="536.5" cy="302.79" r="1.6"/><circle cx="541.5" cy="302.02" r="1.6"/><circle cx="547.5" cy="301.25" r="1.6"/><circle cx="552.5" cy="299.97" r="1.6"/><circle cx="558.5" cy="298.64" r="1.6"/><circle cx="563.5" cy="297.62" r="1.6"/><circle cx="568.5" cy="297" r="1.6"/><circle cx="574.5" cy="296.8" r="1.6"/><circle cx="579.5" cy="296.8" r="1.6"/><circle cx="585.5" cy="297.01" r="1.6"/><circle cx="590.5" cy="297.25" r="1.6"/><circle cx="595.5" cy="297.89" r="1.6"/><circle cx="601.5" cy="298.66" r="1.6"/><circle cx="606.5" cy="299.44" r="1.6"/><circle cx="612.5" cy="300.25" r="1.6"/><circle cx="617.5" cy="301.05" r="1.6"/><circle cx="622.5" cy="301.55" r="1.6"/><circle cx="628.5" cy="301.97" r="1.6"/><circle cx="633.5" cy="302.82" r="1.6"/><circle cx="638.5" cy="303.84" r="1.6"/><circle cx="644.5" cy="304.86" r="1.6"/><circle cx="649.5" cy="306.38" r="1.6"/><circle cx="655.5" cy="307.97" r="1.6"/><circle cx="660.5" cy="308.81" r="1.6"/><circle cx="665.5" cy="310.31" r="1.6"/><circle cx="671.5" cy="311.81" r="1.6"/><circle cx="676.5" cy="313.04" r="1.6"/><circle cx="682.5" cy="314.22" r="1.6"/><circle cx="687.5" cy="315.18" r="1.6"/><circle cx="692.5" cy="316.07" r="1.6"/><circle cx="698.5" cy="316.58" r="1.6"/><circle cx="703.5" cy="316.86" r="1.6"/><circle cx="709.5" cy="316.4" r="1.6"/><circle cx="714.5" cy="315.23" r="1.6"/><circle cx="719.5" cy="314.3" r="1.6"/><circle cx="725.5" cy="313.78" r="1.6"/><circle cx="730.5" cy="313.25" r="1.6"/><circle cx="736.5" cy="312.56" r="1.6"/><circle cx="741.5" cy="311.86" r="1.6"/><circle cx="746.5" cy="310.49" r="1.6"/><circle cx="752.5" cy="308.94" r="1.6"/><circle cx="757.5" cy="307.15" r="1.6"/><circle cx="762.5" cy="305.22" r="1.6"/><circle cx="768.5" cy="303.01" r="1.6"/><circle cx="773.5" cy="300.75" r="1.6"/><circle cx="779.5" cy="298.85" r="1.6"/><circle cx="784.5" cy="297.05" r="1.6"/><circle cx="789.5" cy="295.04" r="1.6"/><circle cx="795.5" cy="292.9" r="1.6"/><circle cx="800.5" cy="290.91" r="1.6"/><circle cx="806.5" cy="288.94" r="1.6"/><circle cx="811.5" cy="286.89" r="1.6"/><circle cx="816.5" cy="284.81" r="1.6"/><circle cx="822.5" cy="282.49" r="1.6"/><circle cx="827.5" cy="280.02" r="1.6"/><circle cx="833.5" cy="277.56" r="1.6"/><circle cx="838.5" cy="275.1" r="1.6"/><circle cx="843.5" cy="273.23" r="1.6"/><circle cx="849.5" cy="271.6" r="1.6"/><circle cx="854.5" cy="270.7" r="1.6"/></g>
</g>
<text x="15.3" y="340" font-size="10.3" fill="#e07a30">RSI</text>
<g clip-path="url(#crsi)">
<path d="M15 352.5 H854 M15 376.5 H854" stroke="#15158e" stroke-width="1" shape-rendering="crispEdges"/>
<path d="M15 353.5 H854 M15 377.5 H854" stroke="#2323b4" stroke-width="1" shape-rendering="crispEdges"/>
<g clip-path="url(#cband)"><polyline points="14,357.6 21.6,364.3 29.3,371 35,372.3 40.7,372.3 45.5,370.4 52.2,371 63.7,367.2 69.4,366.2 77,368.1 84.7,364.3 89.4,363.9 96.1,369.6 105.7,370.4 113.3,371 119,370.4 126.7,374.8 134.3,374.8 142,372.9 147.7,373.8 154.4,371 159.2,373.8 163,376.7 166.8,374.8 174.4,372.3 180.2,373.5 186.8,367.2 191.6,369.1 210.7,369.1 213.6,370.4 220.3,366.2 227.9,362.8 239.5,362.4 245.3,360.8 251,358.2 258.6,360.8 266.3,364.7 273.9,364.3 277.7,362 283.5,354.7 287.3,352.3 300.7,352.3 302.6,354.4 310.2,354.4 315.9,357 323.6,357 329.3,357.6 335,356.6 342.7,356.6 347.5,362.4 354.1,363.3 361.8,366.2 369.4,366.6 374.8,369.6 380.9,359.5 390.4,365.2 396.2,364.3 403.8,364.7 407.6,366.6 413.3,366.6 418.1,373.8 422.9,374.8 428.6,374.2 435.3,375.4 440.1,378 444.9,379.6 450,377.3 452.7,377.3 462.2,375.4 472.7,368.1 477.5,366.2 483.2,361.4 491.8,363.3 497.6,365.2 509,368.5 518.6,366.6 524.3,367.2 530,363.9 535.8,358.2 541.5,362.4 548.2,356.3 558.7,357 566.3,360.1 575.9,367.7 585.4,370.4 595,366.6 601.7,366.6 608.3,372.3 614.1,371 621.7,369.1 627.4,371 637.9,371.5 640.8,374.8 644.6,379.3 649.4,371.6 654.6,373.4 659.8,371.3 670.2,375.9 676.5,371.3 681.7,372.8 690,371.75 695.2,371.3 700.4,372.2 709.8,365.5 714,367.2 719.2,365.1 724.4,365.9 731.7,368.6 737.9,365.1 747.3,360.3 757.7,360.3 765,357.6 775.4,352.8 792.1,352.8 798.3,351.3 806.7,349.9 816,346.75 823.3,346.3 827.5,344.25 833.75,350.5 839,348.4 843.1,350.5 849.4,358.8 853.5,357.2" fill="none" stroke="#e8903a" stroke-width="1.1" stroke-linejoin="round"/></g>
<g clip-path="url(#cup)"><polyline points="14,357.6 21.6,364.3 29.3,371 35,372.3 40.7,372.3 45.5,370.4 52.2,371 63.7,367.2 69.4,366.2 77,368.1 84.7,364.3 89.4,363.9 96.1,369.6 105.7,370.4 113.3,371 119,370.4 126.7,374.8 134.3,374.8 142,372.9 147.7,373.8 154.4,371 159.2,373.8 163,376.7 166.8,374.8 174.4,372.3 180.2,373.5 186.8,367.2 191.6,369.1 210.7,369.1 213.6,370.4 220.3,366.2 227.9,362.8 239.5,362.4 245.3,360.8 251,358.2 258.6,360.8 266.3,364.7 273.9,364.3 277.7,362 283.5,354.7 287.3,352.3 300.7,352.3 302.6,354.4 310.2,354.4 315.9,357 323.6,357 329.3,357.6 335,356.6 342.7,356.6 347.5,362.4 354.1,363.3 361.8,366.2 369.4,366.6 374.8,369.6 380.9,359.5 390.4,365.2 396.2,364.3 403.8,364.7 407.6,366.6 413.3,366.6 418.1,373.8 422.9,374.8 428.6,374.2 435.3,375.4 440.1,378 444.9,379.6 450,377.3 452.7,377.3 462.2,375.4 472.7,368.1 477.5,366.2 483.2,361.4 491.8,363.3 497.6,365.2 509,368.5 518.6,366.6 524.3,367.2 530,363.9 535.8,358.2 541.5,362.4 548.2,356.3 558.7,357 566.3,360.1 575.9,367.7 585.4,370.4 595,366.6 601.7,366.6 608.3,372.3 614.1,371 621.7,369.1 627.4,371 637.9,371.5 640.8,374.8 644.6,379.3 649.4,371.6 654.6,373.4 659.8,371.3 670.2,375.9 676.5,371.3 681.7,372.8 690,371.75 695.2,371.3 700.4,372.2 709.8,365.5 714,367.2 719.2,365.1 724.4,365.9 731.7,368.6 737.9,365.1 747.3,360.3 757.7,360.3 765,357.6 775.4,352.8 792.1,352.8 798.3,351.3 806.7,349.9 816,346.75 823.3,346.3 827.5,344.25 833.75,350.5 839,348.4 843.1,350.5 849.4,358.8 853.5,357.2" fill="none" stroke="#c43cc4" stroke-width="1.1" stroke-linejoin="round"/></g>
<g clip-path="url(#cdn)"><polyline points="14,357.6 21.6,364.3 29.3,371 35,372.3 40.7,372.3 45.5,370.4 52.2,371 63.7,367.2 69.4,366.2 77,368.1 84.7,364.3 89.4,363.9 96.1,369.6 105.7,370.4 113.3,371 119,370.4 126.7,374.8 134.3,374.8 142,372.9 147.7,373.8 154.4,371 159.2,373.8 163,376.7 166.8,374.8 174.4,372.3 180.2,373.5 186.8,367.2 191.6,369.1 210.7,369.1 213.6,370.4 220.3,366.2 227.9,362.8 239.5,362.4 245.3,360.8 251,358.2 258.6,360.8 266.3,364.7 273.9,364.3 277.7,362 283.5,354.7 287.3,352.3 300.7,352.3 302.6,354.4 310.2,354.4 315.9,357 323.6,357 329.3,357.6 335,356.6 342.7,356.6 347.5,362.4 354.1,363.3 361.8,366.2 369.4,366.6 374.8,369.6 380.9,359.5 390.4,365.2 396.2,364.3 403.8,364.7 407.6,366.6 413.3,366.6 418.1,373.8 422.9,374.8 428.6,374.2 435.3,375.4 440.1,378 444.9,379.6 450,377.3 452.7,377.3 462.2,375.4 472.7,368.1 477.5,366.2 483.2,361.4 491.8,363.3 497.6,365.2 509,368.5 518.6,366.6 524.3,367.2 530,363.9 535.8,358.2 541.5,362.4 548.2,356.3 558.7,357 566.3,360.1 575.9,367.7 585.4,370.4 595,366.6 601.7,366.6 608.3,372.3 614.1,371 621.7,369.1 627.4,371 637.9,371.5 640.8,374.8 644.6,379.3 649.4,371.6 654.6,373.4 659.8,371.3 670.2,375.9 676.5,371.3 681.7,372.8 690,371.75 695.2,371.3 700.4,372.2 709.8,365.5 714,367.2 719.2,365.1 724.4,365.9 731.7,368.6 737.9,365.1 747.3,360.3 757.7,360.3 765,357.6 775.4,352.8 792.1,352.8 798.3,351.3 806.7,349.9 816,346.75 823.3,346.3 827.5,344.25 833.75,350.5 839,348.4 843.1,350.5 849.4,358.8 853.5,357.2" fill="none" stroke="#22c040" stroke-width="1.1" stroke-linejoin="round"/></g>
</g>
<rect x="15.5" y="378.5" width="61" height="19" rx="2" fill="#5e7185" stroke="#a8bccd" stroke-width="1"/>
<rect x="14" y="378" width="2" height="27" fill="#cfe6ec"/>
<text x="22.3" y="391.9" font-size="11" fill="#ffffff" textLength="46.8" lengthAdjust="spacingAndGlyphs">Фев 2020</text>
<rect x="656.5" y="378.5" width="63" height="19" rx="2" fill="#5e7185" stroke="#a8bccd" stroke-width="1"/>
<rect x="655" y="378" width="2" height="27" fill="#cfe6ec"/>
<text x="662.8" y="391.8" font-size="11.2" fill="#ffffff" textLength="50" lengthAdjust="spacingAndGlyphs">Мар 2020</text>
<g fill="#ffffff" stroke="#ffffff" stroke-width="0.25" font-size="11" text-anchor="middle" letter-spacing="-0.4">
<text x="39.7" y="424">4</text>
<text x="71.7" y="424">5</text>
<text x="104.7" y="424">6</text>
<text x="136.7" y="424">7</text>
<text x="168.7" y="424">10</text>
<text x="201.7" y="424">11</text>
<text x="233.7" y="424">12</text>
<text x="265.7" y="424">13</text>
<text x="298.7" y="424">14</text>
<text x="330.7" y="424">17</text>
<text x="363.7" y="424">18</text>
<text x="395.7" y="424">19</text>
<text x="427.7" y="424">20</text>
<text x="460.7" y="424">21</text>
<text x="492.7" y="424">24</text>
<text x="524.7" y="424">25</text>
<text x="557.7" y="424">26</text>
<text x="589.7" y="424">27</text>
<text x="621.7" y="424">28</text>
<text x="654.7" y="424">2</text>
<text x="686.7" y="424">3</text>
<text x="718.7" y="424">4</text>
<text x="751.7" y="424">5</text>
<text x="783.7" y="424">6</text>
<text x="815.7" y="424">9</text>
<text x="848.7" y="424">10</text>
<text x="880.7" y="424">11</text>
</g>
</svg></body></html>
